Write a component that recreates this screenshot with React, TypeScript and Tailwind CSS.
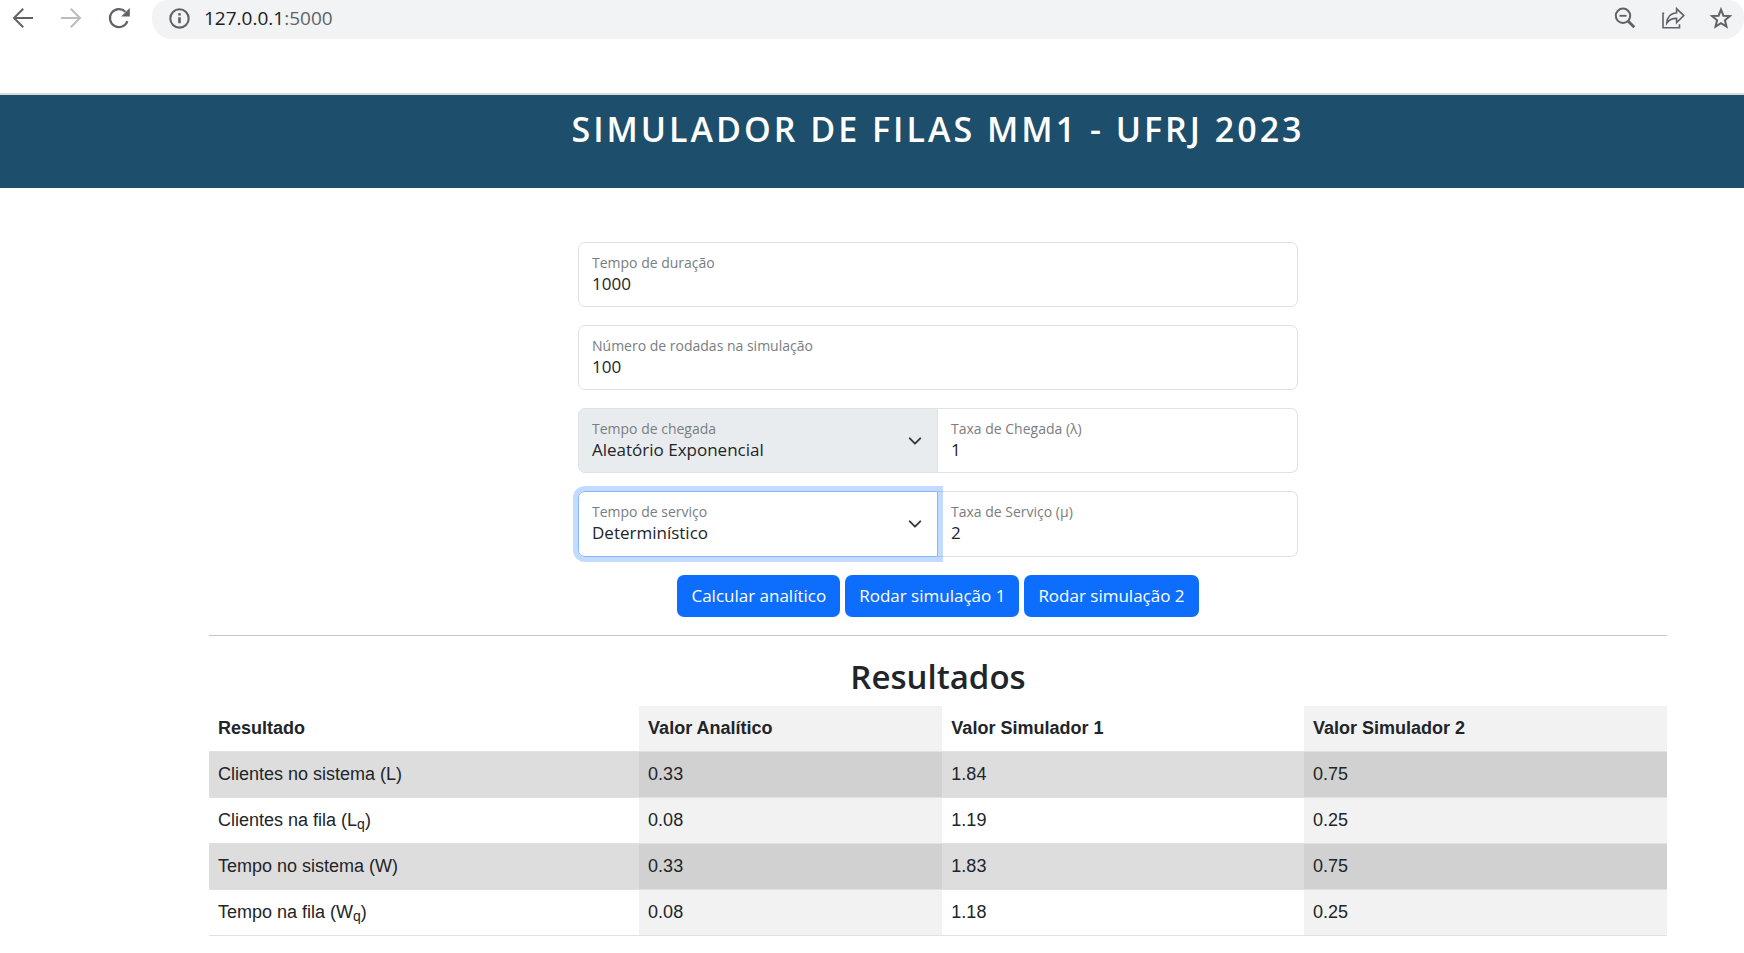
import type { ReactNode } from "react";

const sans = "font-['Open_Sans','Noto_Sans',sans-serif]";
const arial = "font-['Liberation_Sans',Arial,sans-serif]";

function BrowserBar() {
  return (
    <header className="flex h-[93px] items-start bg-white">
      <nav aria-label="Navegador" className="flex h-9 shrink-0 items-center gap-6 pl-[11px] text-[#5f6368]">
        <button type="button" aria-label="Voltar" className="size-6">
          <svg viewBox="0 0 24 24" className="size-6" fill="none" stroke="currentColor" strokeWidth="2">
            <path d="M22 12H3.5M12.2 2.8 3 12l9.2 9.2" />
          </svg>
        </button>
        <button type="button" aria-label="Avançar" className="size-6 text-[#babcbe]">
          <svg viewBox="0 0 24 24" className="size-6" fill="none" stroke="currentColor" strokeWidth="2">
            <path d="M2 12h18.5M11.8 2.8 21 12l-9.2 9.2" />
          </svg>
        </button>
        <button type="button" aria-label="Recarregar" className="size-6">
          <svg viewBox="0 0 24 24" className="size-6" fill="none" stroke="currentColor" strokeWidth="2.2">
            <path d="M20.4 15.2A9 9 0 1 1 18.4 5.8" />
            <path d="M22.8 2v8.6h-8.6z" fill="currentColor" stroke="none" />
          </svg>
        </button>
      </nav>
      <div className="ml-[21px] flex h-[39px] min-w-0 grow items-center rounded-b-[20px] rounded-t-[16px] bg-[#f1f3f4] pb-[3px] pl-4 pr-[11px] text-[#5f6368]">
        <svg viewBox="0 0 24 24" className="size-6 shrink-0" fill="none" stroke="currentColor" strokeWidth="2.1">
          <circle cx="11.5" cy="12.4" r="9.2" />
          <path d="M11.5 11.2v6" strokeWidth="2.6" />
          <path d="M11.5 7.1v2.4" strokeWidth="2.6" />
        </svg>
        <p className={`ml-3 grow text-[19px] leading-6 ${sans}`}>
          <span className="text-[#202124]">127.0.0.1</span>:5000
        </p>
        <div className="flex items-center gap-6">
          <button type="button" aria-label="Zoom" className="size-6">
            <svg viewBox="0 0 24 24" className="size-6" fill="none" stroke="currentColor" strokeWidth="2">
              <circle cx="10" cy="9.8" r="7.2" />
              <path d="M6.4 9.8h7.2" strokeWidth="1.8" />
              <path d="m15 15 6.3 6.3" strokeWidth="2.8" />
            </svg>
          </button>
          <button type="button" aria-label="Compartilhar" className="size-6">
            <svg viewBox="0 0 24 24" className="size-6" fill="none" stroke="currentColor" strokeWidth="1.6">
              <path d="M3.2 7.2H2v14.6h16.5v-3.6" />
              <path d="M15.6 2.6v4.2C9.4 7.4 6.2 11 5.8 17c2.4-3.6 5.4-4.6 9.8-4.6v4.2L22.8 9.6z" />
            </svg>
          </button>
          <button type="button" aria-label="Favoritar" className="size-6">
            <svg viewBox="0 0 24 24" className="size-6" fill="none" stroke="currentColor" strokeWidth="2">
              <path d="m12 3.6 2.4 6.1 6.5.4-5 4.2 1.6 6.3L12 17.1l-5.5 3.5 1.6-6.3-5-4.2 6.5-.4z" />
            </svg>
          </button>
        </div>
      </div>
    </header>
  );
}

function Field({
  id,
  label,
  look,
  select,
  children,
}: {
  id: string;
  label: string;
  look: string;
  select?: boolean;
  children: ReactNode;
}) {
  return (
    <div className={`flex min-w-0 items-center border pl-[13px] pr-[15px] ${look}`}>
      <div className="flex h-full min-w-0 grow flex-col pt-[10px]">
        <label htmlFor={id} className="text-[14px] leading-5 text-[#797d81]">
          {label}
        </label>
        {children}
      </div>
      {select && (
        <svg
          viewBox="0 0 16 16"
          className="size-[14px] shrink-0"
          fill="none"
          stroke="#343a40"
          strokeWidth="2.2"
          strokeLinecap="round"
          strokeLinejoin="round"
        >
          <path d="m2 5 6 6 6-6" />
        </svg>
      )}
    </div>
  );
}

const control =
  "block w-full appearance-none bg-transparent p-0 text-[17px] leading-[22px] text-[#212529] outline-none";

const rows: { name: ReactNode; values: string[] }[] = [
  { name: "Clientes no sistema (L)", values: ["0.33", "1.84", "0.75"] },
  { name: <>Clientes na fila (L<sub className="text-[14px]">q</sub>)</>, values: ["0.08", "1.19", "0.25"] },
  { name: "Tempo no sistema (W)", values: ["0.33", "1.83", "0.75"] },
  { name: <>Tempo na fila (W<sub className="text-[14px]">q</sub>)</>, values: ["0.08", "1.18", "0.25"] },
];

export default function App() {
  return (
    <div className={`min-h-screen bg-white text-[#212529] ${sans}`}>
      <BrowserBar />
      <div className="h-[95px] border-t-2 border-[#d9dcdd] bg-[#1d4e6b] pl-[209px] pr-[77px] pt-3">
        <h1 className="text-center text-[34px] font-semibold leading-[44px] tracking-[3px] text-white">
          SIMULADOR DE FILAS MM1 - UFRJ 2023
        </h1>
      </div>
      <main className="pl-[209px] pr-[77px] pt-[54px]">
        <form className="mx-auto flex max-w-[720px] flex-col gap-[18px]" onSubmit={(e) => e.preventDefault()}>
          <Field id="duracao" label="Tempo de duração" look="h-[65px] rounded-[7px] border-[#dee2e6]">
            <input id="duracao" type="text" defaultValue="1000" className={control} />
          </Field>
          <Field id="rodadas" label="Número de rodadas na simulação" look="h-[65px] rounded-[7px] border-[#dee2e6]">
            <input id="rodadas" type="text" defaultValue="100" className={control} />
          </Field>
          <div className="grid grid-cols-2">
            <Field
              id="chegada"
              label="Tempo de chegada"
              select
              look="h-[65px] rounded-l-[7px] border-[#dee2e6] bg-[#e9ecef]"
            >
              <select id="chegada" disabled className={`${control} opacity-100`}>
                <option>Aleatório Exponencial</option>
              </select>
            </Field>
            <Field id="lambda" label="Taxa de Chegada (λ)" look="h-[65px] rounded-r-[7px] border-l-0 border-[#dee2e6]">
              <input id="lambda" type="text" defaultValue="1" className={control} />
            </Field>
          </div>
          <div className="grid grid-cols-2">
            <Field
              id="servico"
              label="Tempo de serviço"
              select
              look="z-10 h-[66px] rounded-l-[7px] border-[#86b7fe] shadow-[0_0_0_5px_rgba(13,110,253,0.25)]"
            >
              <select id="servico" className={control}>
                <option>Determinístico</option>
                <option>Aleatório Exponencial</option>
              </select>
            </Field>
            <Field id="mu" label="Taxa de Serviço (μ)" look="h-[66px] rounded-r-[7px] border-l-0 border-[#dee2e6]">
              <input id="mu" type="text" defaultValue="2" className={control} />
            </Field>
          </div>
          <div className="flex justify-center gap-[5px]">
            {["Calcular analítico", "Rodar simulação 1", "Rodar simulação 2"].map((text) => (
              <button
                key={text}
                type="button"
                className="h-[42px] rounded-[7px] bg-[#0d6efd] px-[14px] text-[17px] leading-6 text-white"
              >
                {text}
              </button>
            ))}
          </div>
        </form>
        <hr className="mt-[18px] border-[#c4c5c6]" />
        <section className="pt-[19px]">
          <h2 className="mb-[7px] text-center text-[33px] font-semibold leading-[44px]">Resultados</h2>
          <table className={`w-full table-fixed border-collapse text-left text-[18px] leading-[27px] ${arial}`}>
            <colgroup>
              <col className="w-[29.5%]" />
              <col className="w-[20.8%] bg-[#f2f2f2]" />
              <col className="w-[24.8%]" />
              <col className="w-[24.9%] bg-[#f2f2f2]" />
            </colgroup>
            <thead>
              <tr className="h-[45px] border-b border-[#dee2e6]">
                {["Resultado", "Valor Analítico", "Valor Simulador 1", "Valor Simulador 2"].map((h) => (
                  <th key={h} scope="col" className="px-[9px] py-0 font-bold">
                    {h}
                  </th>
                ))}
              </tr>
            </thead>
            <tbody>
              {rows.map((row, i) => (
                <tr key={i} className="h-[46px] border-b border-[#dee2e6] odd:bg-black/[0.133]">
                  <td className="px-[9px] py-0">{row.name}</td>
                  {row.values.map((v, j) => (
                    <td key={j} className="px-[9px] py-0">
                      {v}
                    </td>
                  ))}
                </tr>
              ))}
            </tbody>
          </table>
        </section>
      </main>
    </div>
  );
}
